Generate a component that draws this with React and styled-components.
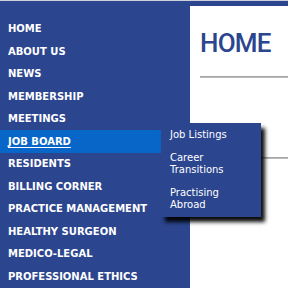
import React from 'react';
import styled, {createGlobalStyle} from 'styled-components';

const navItems = [
    'HOME',
    'ABOUT US',
    'NEWS',
    'MEMBERSHIP',
    'MEETINGS',
    'JOB BOARD',
    'RESIDENTS',
    'BILLING CORNER',
    'PRACTICE MANAGEMENT',
    'HEALTHY SURGEON',
    'MEDICO-LEGAL',
    'PROFESSIONAL ETHICS',
];

const jobMenu = ['Job Listings', 'Career Transitions', 'Practising Abroad'];

export default function App() {
    return (
        <>
            <GlobalStyle />
            <Page>
                <Sidebar>
                    <NavList>
                        {navItems.map(item => (
                            <NavItem key={item} active={item === 'JOB BOARD'}>
                                <NavLink active={item === 'JOB BOARD'}>{item}</NavLink>
                                {item === 'JOB BOARD' && (
                                    <Dropdown>
                                        {jobMenu.map(sub => (
                                            <DropItem key={sub}>{sub}</DropItem>
                                        ))}
                                    </Dropdown>
                                )}
                            </NavItem>
                        ))}
                    </NavList>
                </Sidebar>
                <Content>
                    <Heading>HOME</Heading>
                    <Rule />
                    <Rule spaced />
                </Content>
            </Page>
        </>
    );
}

const GlobalStyle = createGlobalStyle`
    html, body {
        margin: 0;
        padding: 0;
        background: #2b458f;
    }
`;

const Page = styled.div`
    display: flex;
    height: 287px;
    border-top: 1px solid #cdd1db;
    background: #2b458f;
    overflow: hidden;
`;

const Sidebar = styled.div`
    width: 190px;
    flex-shrink: 0;
`;

const NavList = styled.ul`
    list-style: none;
    margin: 0;
    padding: 16.5px 0 0 0;
    width: 161px;
`;

const NavItem = styled.li`
    position: relative;
    height: 22.5px;
    display: flex;
    align-items: center;
    padding-left: 8px;
    background: ${props => props.active ? '#0866c8' : 'transparent'};
`;

const NavLink = styled.span`
    font-family: "DejaVu Sans", Verdana, sans-serif;
    font-weight: bold;
    font-size: 10px;
    color: #fff;
    white-space: nowrap;
    text-decoration: ${props => props.active ? 'underline' : 'none'};
    text-underline-offset: 2px;
`;

const Dropdown = styled.div`
    position: absolute;
    top: -7px;
    left: 161px;
    width: 100px;
    background: #2b458f;
    box-shadow: 4px 5px 4px rgba(0, 0, 0, 0.95);
    padding: 0 0 1px 0;
    z-index: 2;
`;

const DropItem = styled.div`
    padding: 5.5px 9px 5.5px 9px;
    font-family: "DejaVu Sans", Verdana, sans-serif;
    font-size: 10px;
    line-height: 12px;
    color: #fff;
`;

const Content = styled.div`
    flex: 1;
    background: #fff;
    margin-top: 5px;
    padding-left: 10px;
`;

const Heading = styled.h1`
    margin: 21.5px 0 0 0;
    font-family: Roboto, "Liberation Sans", sans-serif;
    font-weight: 500;
    font-size: 26px;
    line-height: 30px;
    letter-spacing: -0.8px;
    color: #2b458f;
`;

const Rule = styled.div`
    height: 2px;
    margin-top: ${props => props.spaced ? '79px' : '18px'};
    background: linear-gradient(#9c9c9c, #c4c4c4);
`;
